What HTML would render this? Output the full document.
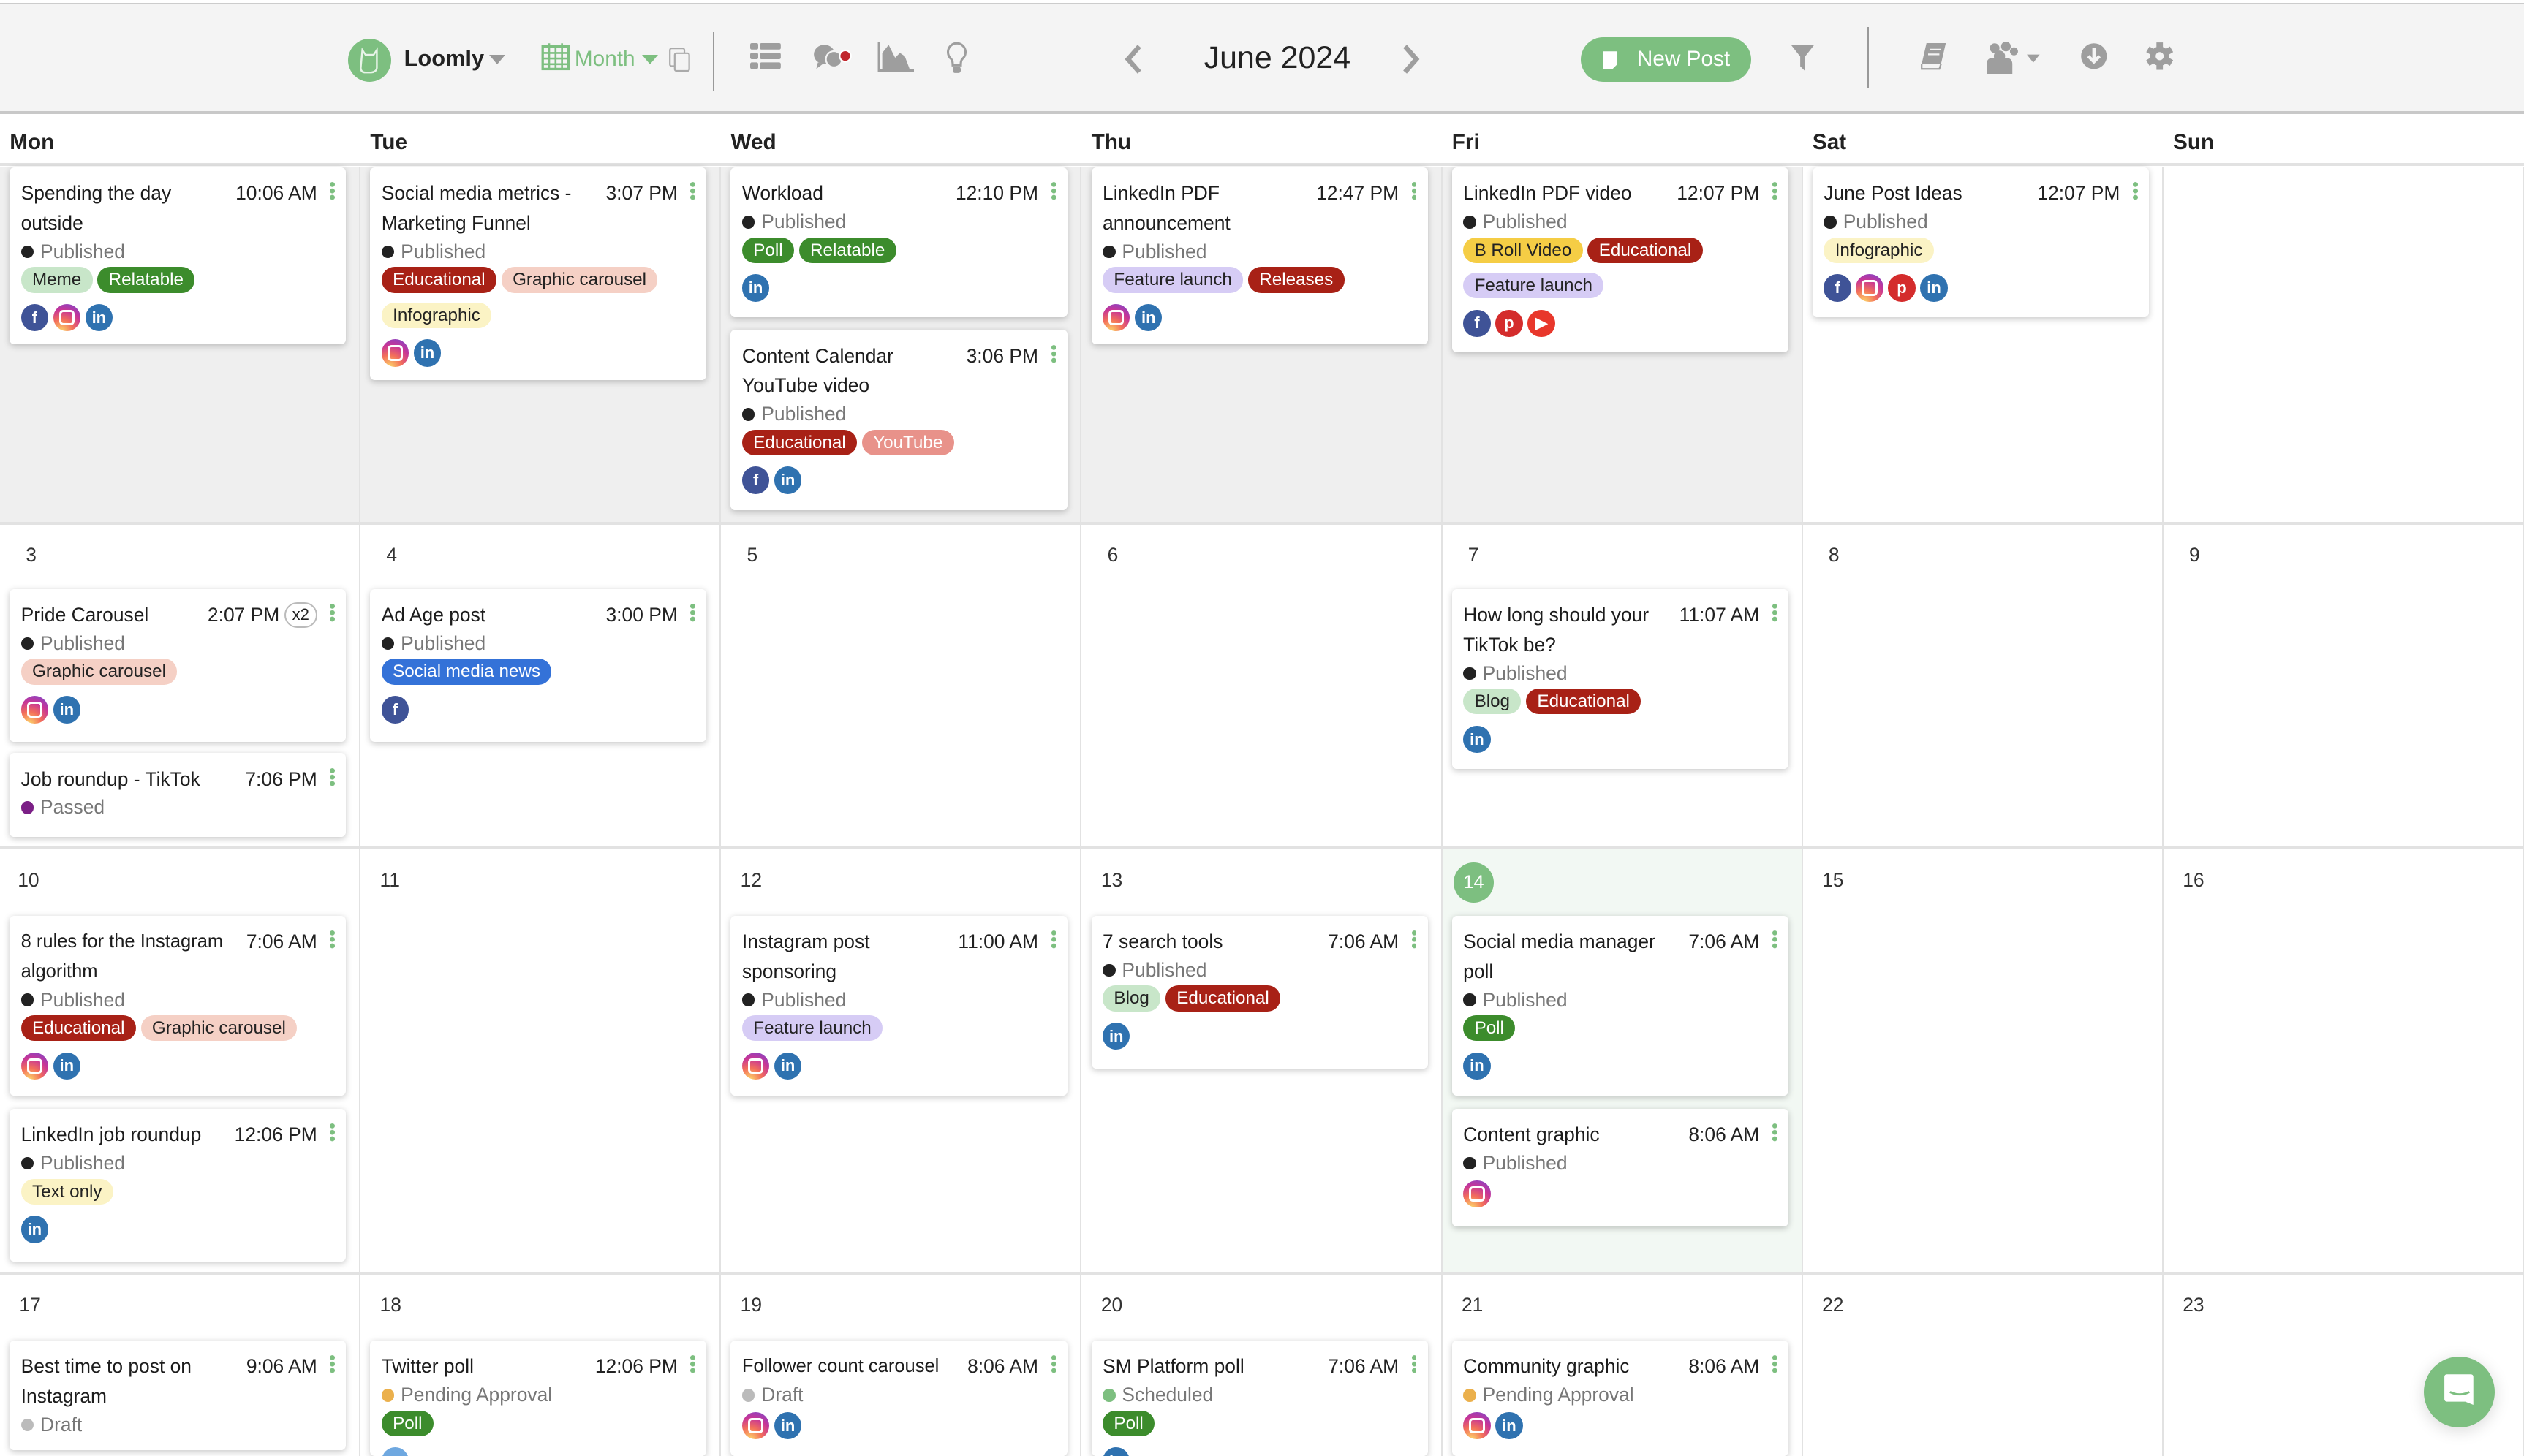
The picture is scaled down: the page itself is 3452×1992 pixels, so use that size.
<!DOCTYPE html>
<html><head><meta charset="utf-8"><style>
*{box-sizing:border-box;margin:0;padding:0}
html,body{width:3452px;height:1992px;overflow:hidden;background:#fff}
#w{zoom:2.2015;width:1568px;height:905px;position:relative;font-family:"Liberation Sans",sans-serif;color:#222;overflow:hidden}
.tb{position:absolute;left:0;top:2px;width:1568px;height:69px;background:#f4f4f4;border-top:1px solid #ccc;border-bottom:2px solid #c8c8c8}
.ab{position:absolute}
.dh{position:absolute;top:73px;height:30px;width:1568px;border-bottom:2px solid #e2e2e2;background:#fff}
.dh span{position:absolute;top:8px;font-weight:bold;font-size:13.5px}
.cell{position:absolute;width:224px;border-right:1px solid #e2e2e2;border-bottom:2px solid #e2e2e2}
.g{background:#efefef}.t{background:#f2f8f3}
.num{position:absolute;left:16px;top:12px;font-size:12px;color:#333}
.card{position:absolute;width:209px;background:#fff;border-radius:3px;box-shadow:0 1px 4px rgba(0,0,0,.22);padding:7px 7px 8px 7px;overflow:hidden}
.tr{display:flex;justify-content:space-between;align-items:flex-start}
.ti{font-size:12px;line-height:18.5px;width:136px;font-weight:500;color:#1c1c1c}
.tm{font-size:12px;line-height:18.5px;white-space:nowrap;display:flex;align-items:center}
.dots{display:inline-block;width:3px;height:12px;margin-left:8px;margin-top:-3px;background:radial-gradient(circle,#7dbf80 1.4px,transparent 1.6px) 0 0/3px 4px}
.x2{display:inline-block;border:1px solid #bbb;border-radius:9px;font-size:10px;line-height:14px;padding:0 4px;margin-left:3px}
.st{font-size:12px;line-height:17px;color:#777;display:flex;align-items:center}
.st i{width:8px;height:8px;border-radius:50%;background:#222;margin-right:4px;display:inline-block}
.tg{line-height:0}
.tg b{display:inline-block;height:16px;line-height:16px;border-radius:8px;padding:0 7px;font-size:11px;font-weight:normal;margin:1px 3px 5px 0;color:#222}
.gl{background:#c8e6c9}.gd{background:#3c8c2c;color:#fff!important}.ed{background:#a82116;color:#fff!important}.gc{background:#f5d0c5}.inf{background:#fbf3c5}.fl{background:#d6ccf5}.yt{background:#e8928a;color:#fff!important}.br{background:#f5cd45}.sm{background:#3472d8;color:#fff!important}
.ic{display:flex;gap:3px;margin-top:2px}
.ic s{width:17px;height:17px;border-radius:50%;color:#fff;font-size:10px;font-weight:bold;text-decoration:none;display:flex;align-items:center;justify-content:center;font-family:"Liberation Sans",sans-serif}
.fb{background:#3f5397}.li{background:#2f72b0}.pi{background:#d42c2c}.yo{background:#e8372b}
.ig{background:radial-gradient(circle at 30% 100%,#fcd56b 0,#f3705a 35%,#c73597 65%,#6f4bd6 100%)}
.ig::after{content:"";width:7px;height:7px;border:1.4px solid #fff;border-radius:2.5px}
</style></head><body><div id="w">
<div class="tb"></div>
<div class="ab" style="left:216px;top:24px;width:27px;height:27px;border-radius:50%;background:#7dbf80"></div>
<svg class="ab" style="left:222px;top:29px" width="15" height="17" viewBox="0 0 15 17"><path d="M3 2l2 3h5l2-3v11c0 2-2 3-4 3H5c-2 0-3-1-3-3z" fill="none" stroke="#e8f4e8" stroke-width="1.1"/></svg>
<div class="ab" style="left:251px;top:28px;font-weight:bold;font-size:14px">Loomly</div>
<div class="ab" style="left:304px;top:34px;border:5px solid transparent;border-top:6px solid #999"></div>
<svg class="ab" style="left:336px;top:26px" width="18" height="18" viewBox="0 0 18 18"><rect x="1" y="3" width="16" height="14" fill="none" stroke="#7dbf80" stroke-width="1.5"/><path d="M1 7h16M1 10.5h16M1 14h16M5 3v14M9 3v14M13 3v14M5 1v4M13 1v4" stroke="#7dbf80" stroke-width="1.2"/></svg>
<div class="ab" style="left:357px;top:29px;font-size:13.5px;color:#7dbf80">Month</div>
<div class="ab" style="left:399px;top:34px;border:5px solid transparent;border-top:6px solid #7dbf80"></div>
<svg class="ab" style="left:415px;top:29px" width="14" height="16"><rect x="1" y="1" width="9" height="11" rx="1" fill="none" stroke="#aaa"/><rect x="4" y="4" width="9" height="11" rx="1" fill="#f4f4f4" stroke="#aaa"/></svg>
<div class="ab" style="left:443px;top:20px;width:1px;height:37px;background:#999"></div>
<svg class="ab" style="left:466px;top:27px" width="19" height="16"><g fill="#9e9e9e"><rect x="0" y="0" width="5" height="4" rx="1"/><rect x="6" y="0" width="13" height="4" rx="1"/><rect x="0" y="6" width="5" height="4" rx="1"/><rect x="6" y="6" width="13" height="4" rx="1"/><rect x="0" y="12" width="5" height="4" rx="1"/><rect x="6" y="12" width="13" height="4" rx="1"/></g></svg>
<svg class="ab" style="left:505px;top:27px" width="26" height="20"><ellipse cx="7" cy="7" rx="6.5" ry="6" fill="#9e9e9e"/><path d="M3 12l-1 4 4-3z" fill="#9e9e9e"/><ellipse cx="13" cy="10" rx="5" ry="5" fill="#9e9e9e" stroke="#f4f4f4"/><circle cx="20" cy="8" r="3.5" fill="#c1272d" stroke="#fff"/></svg>
<svg class="ab" style="left:545px;top:26px" width="23" height="19"><path d="M1 0v18h22" fill="none" stroke="#9e9e9e" stroke-width="1.5"/><path d="M3 17V7l4-5 4 8 3-3 3 2 3 8z" fill="#9e9e9e"/></svg>
<svg class="ab" style="left:587px;top:26px" width="15" height="21"><path d="M7.5 1a5.5 5.5 0 0 0-3.5 9.7c1 1 1 2.5 1 4h5c0-1.5 0-3 1-4A5.5 5.5 0 0 0 7.5 1z" fill="none" stroke="#9e9e9e" stroke-width="1.4"/><rect x="5" y="15.5" width="5" height="4" rx="1.5" fill="#9e9e9e"/></svg>
<svg class="ab" style="left:697px;top:27px" width="14" height="20"><path d="M11 2L4 10l7 8" fill="none" stroke="#9e9e9e" stroke-width="3"/></svg>
<div class="ab" style="left:748px;top:25px;font-size:19.5px;color:#222">June 2024</div>
<svg class="ab" style="left:870px;top:27px" width="14" height="20"><path d="M3 2l7 8-7 8" fill="none" stroke="#9e9e9e" stroke-width="3"/></svg>
<div class="ab" style="left:982px;top:23px;width:106px;height:28px;border-radius:14px;background:#7dbf80"></div>
<svg class="ab" style="left:995px;top:31px" width="12" height="13"><path d="M1 1h9v8l-3 3H1z" fill="#fff"/></svg>
<div class="ab" style="left:1017px;top:29px;font-size:13.5px;color:#fff">New Post</div>
<svg class="ab" style="left:1113px;top:28px" width="14" height="16"><path d="M0 0h14L8.5 7v9L5.5 13V7z" fill="#9e9e9e"/></svg>
<div class="ab" style="left:1160px;top:17px;width:1px;height:38px;background:#999"></div>
<svg class="ab" style="left:1193px;top:27px" width="17" height="17"><path d="M4 0h12l-3 13H1z" fill="#9e9e9e"/><path d="M1 13l0 3h11l1-3" fill="none" stroke="#9e9e9e"/><path d="M6 4h7M5 7h7" stroke="#f4f4f4"/></svg>
<svg class="ab" style="left:1234px;top:26px" width="36" height="20"><g fill="#9e9e9e"><circle cx="5" cy="4" r="3"/><circle cx="12" cy="3" r="3"/><circle cx="8" cy="9" r="3.5"/><path d="M0 14c0-3 2-4 4-4h8c2 0 4 1 4 4v6H0z"/><circle cx="17" cy="6" r="2.5"/></g><path d="M25 8h8l-4 5z" fill="#9e9e9e"/></svg>
<svg class="ab" style="left:1292px;top:26px" width="18" height="18"><circle cx="9" cy="9" r="8" fill="#9e9e9e"/><path d="M9 4v8M5.5 9L9 12.5 12.5 9" fill="none" stroke="#f4f4f4" stroke-width="2"/></svg>
<svg class="ab" style="left:1333px;top:26px" width="17" height="18"><g fill="#9e9e9e" transform="translate(8.5 9)"><rect x="-2" y="-8.5" width="4" height="17"/><rect x="-2" y="-8.5" width="4" height="17" transform="rotate(60)"/><rect x="-2" y="-8.5" width="4" height="17" transform="rotate(120)"/><circle r="6"/></g><circle cx="8.5" cy="9" r="2.5" fill="#f4f4f4"/></svg>

<div class="dh"><span style="left:6px">Mon</span><span style="left:230px">Tue</span><span style="left:454px">Wed</span><span style="left:678px">Thu</span><span style="left:902px">Fri</span><span style="left:1126px">Sat</span><span style="left:1350px">Sun</span></div>

<div class="cell g" style="left:0;top:104px;height:222px"></div><div class="cell g" style="left:224px;top:104px;height:222px"></div><div class="cell g" style="left:448px;top:104px;height:222px"></div><div class="cell g" style="left:672px;top:104px;height:222px"></div><div class="cell g" style="left:896px;top:104px;height:222px"></div><div class="cell" style="left:1120px;top:104px;height:222px"></div><div class="cell" style="left:1344px;top:104px;height:222px"></div>
<div class="cell" style="left:0;top:326px;height:202px"><span class="num">3</span></div><div class="cell" style="left:224px;top:326px;height:202px"><span class="num">4</span></div><div class="cell" style="left:448px;top:326px;height:202px"><span class="num">5</span></div><div class="cell" style="left:672px;top:326px;height:202px"><span class="num">6</span></div><div class="cell" style="left:896px;top:326px;height:202px"><span class="num">7</span></div><div class="cell" style="left:1120px;top:326px;height:202px"><span class="num">8</span></div><div class="cell" style="left:1344px;top:326px;height:202px"><span class="num">9</span></div>
<div class="cell" style="left:0;top:528px;height:264px"><span class="num" style="left:11px">10</span></div><div class="cell" style="left:224px;top:528px;height:264px"><span class="num" style="left:12px">11</span></div><div class="cell" style="left:448px;top:528px;height:264px"><span class="num" style="left:12px">12</span></div><div class="cell" style="left:672px;top:528px;height:264px"><span class="num" style="left:12px">13</span></div><div class="cell t" style="left:896px;top:528px;height:264px"><span class="ab" style="left:7px;top:8px;width:25px;height:25px;border-radius:50%;background:#7dbf80;color:#fff;font-size:11.5px;text-align:center;line-height:25px">14</span></div><div class="cell" style="left:1120px;top:528px;height:264px"><span class="num" style="left:12px">15</span></div><div class="cell" style="left:1344px;top:528px;height:264px"><span class="num" style="left:12px">16</span></div>
<div class="cell" style="left:0;top:792px;height:113px;border-bottom:0"><span class="num" style="left:12px">17</span></div><div class="cell" style="left:224px;top:792px;height:113px;border-bottom:0"><span class="num" style="left:12px">18</span></div><div class="cell" style="left:448px;top:792px;height:113px;border-bottom:0"><span class="num" style="left:12px">19</span></div><div class="cell" style="left:672px;top:792px;height:113px;border-bottom:0"><span class="num" style="left:12px">20</span></div><div class="cell" style="left:896px;top:792px;height:113px;border-bottom:0"><span class="num" style="left:12px">21</span></div><div class="cell" style="left:1120px;top:792px;height:113px;border-bottom:0"><span class="num" style="left:12px">22</span></div><div class="cell" style="left:1344px;top:792px;height:113px;border-bottom:0"><span class="num" style="left:12px">23</span></div>

<div class="card" style="left:6px;top:104px;height:110px"><div class="tr"><div class="ti">Spending the day outside</div><div class="tm">10:06 AM<span class="dots"></span></div></div><div class="st"><i></i>Published</div><div class="tg"><b class="gl">Meme</b><b class="gd">Relatable</b></div><div class="ic"><s class="fb">f</s><s class="ig"></s><s class="li">in</s></div></div>
<div class="card" style="left:230px;top:104px;height:132px"><div class="tr"><div class="ti">Social media metrics - Marketing Funnel</div><div class="tm">3:07 PM<span class="dots"></span></div></div><div class="st"><i></i>Published</div><div class="tg"><b class="ed">Educational</b><b class="gc">Graphic carousel</b><b class="inf">Infographic</b></div><div class="ic"><s class="ig"></s><s class="li">in</s></div></div>
<div class="card" style="left:454px;top:104px;height:93px"><div class="tr"><div class="ti">Workload</div><div class="tm">12:10 PM<span class="dots"></span></div></div><div class="st"><i></i>Published</div><div class="tg"><b class="gd">Poll</b><b class="gd">Relatable</b></div><div class="ic"><s class="li">in</s></div></div>
<div class="card" style="left:454px;top:205px;height:112px"><div class="tr"><div class="ti" style="width:128px">Content Calendar YouTube video</div><div class="tm">3:06 PM<span class="dots"></span></div></div><div class="st"><i></i>Published</div><div class="tg"><b class="ed">Educational</b><b class="yt">YouTube</b></div><div class="ic"><s class="fb">f</s><s class="li">in</s></div></div>
<div class="card" style="left:678px;top:104px;height:110px"><div class="tr"><div class="ti" style="width:120px">LinkedIn PDF announcement</div><div class="tm">12:47 PM<span class="dots"></span></div></div><div class="st"><i></i>Published</div><div class="tg"><b class="fl">Feature launch</b><b class="ed">Releases</b></div><div class="ic"><s class="ig"></s><s class="li">in</s></div></div>
<div class="card" style="left:902px;top:104px;height:115px"><div class="tr"><div class="ti">LinkedIn PDF video</div><div class="tm">12:07 PM<span class="dots"></span></div></div><div class="st"><i></i>Published</div><div class="tg"><b class="br">B Roll Video</b><b class="ed">Educational</b><b class="fl">Feature launch</b></div><div class="ic"><s class="fb">f</s><s class="pi">p</s><s class="yo">▶</s></div></div>
<div class="card" style="left:1126px;top:104px;height:93px"><div class="tr"><div class="ti">June Post Ideas</div><div class="tm">12:07 PM<span class="dots"></span></div></div><div class="st"><i></i>Published</div><div class="tg"><b class="inf">Infographic</b></div><div class="ic"><s class="fb">f</s><s class="ig"></s><s class="pi">p</s><s class="li">in</s></div></div>

<div class="card" style="left:6px;top:366px;height:95px"><div class="tr"><div class="ti">Pride Carousel</div><div class="tm">2:07 PM<span class="x2">x2</span><span class="dots"></span></div></div><div class="st"><i></i>Published</div><div class="tg"><b class="gc">Graphic carousel</b></div><div class="ic"><s class="ig"></s><s class="li">in</s></div></div>
<div class="card" style="left:6px;top:468px;height:52px"><div class="tr"><div class="ti">Job roundup - TikTok</div><div class="tm">7:06 PM<span class="dots"></span></div></div><div class="st"><i style="background:#7b1f86"></i>Passed</div></div>
<div class="card" style="left:230px;top:366px;height:95px"><div class="tr"><div class="ti">Ad Age post</div><div class="tm">3:00 PM<span class="dots"></span></div></div><div class="st"><i></i>Published</div><div class="tg"><b class="sm">Social media news</b></div><div class="ic"><s class="fb">f</s></div></div>
<div class="card" style="left:902px;top:366px;height:112px"><div class="tr"><div class="ti">How long should your TikTok be?</div><div class="tm">11:07 AM<span class="dots"></span></div></div><div class="st"><i></i>Published</div><div class="tg"><b class="gl">Blog</b><b class="ed">Educational</b></div><div class="ic"><s class="li">in</s></div></div>

<div class="card" style="left:6px;top:569px;height:112px"><div class="tr"><div class="ti" style="width:150px;font-size:11.6px">8 rules for the Instagram algorithm</div><div class="tm">7:06 AM<span class="dots"></span></div></div><div class="st"><i></i>Published</div><div class="tg"><b class="ed">Educational</b><b class="gc">Graphic carousel</b></div><div class="ic"><s class="ig"></s><s class="li">in</s></div></div>
<div class="card" style="left:6px;top:689px;height:95px"><div class="tr"><div class="ti">LinkedIn job roundup</div><div class="tm">12:06 PM<span class="dots"></span></div></div><div class="st"><i></i>Published</div><div class="tg"><b class="inf">Text only</b></div><div class="ic"><s class="li">in</s></div></div>
<div class="card" style="left:454px;top:569px;height:112px"><div class="tr"><div class="ti" style="width:110px">Instagram post sponsoring</div><div class="tm">11:00 AM<span class="dots"></span></div></div><div class="st"><i></i>Published</div><div class="tg"><b class="fl">Feature launch</b></div><div class="ic"><s class="ig"></s><s class="li">in</s></div></div>
<div class="card" style="left:678px;top:569px;height:95px"><div class="tr"><div class="ti">7 search tools</div><div class="tm">7:06 AM<span class="dots"></span></div></div><div class="st"><i></i>Published</div><div class="tg"><b class="gl">Blog</b><b class="ed">Educational</b></div><div class="ic"><s class="li">in</s></div></div>
<div class="card" style="left:902px;top:569px;height:112px"><div class="tr"><div class="ti">Social media manager poll</div><div class="tm">7:06 AM<span class="dots"></span></div></div><div class="st"><i></i>Published</div><div class="tg"><b class="gd">Poll</b></div><div class="ic"><s class="li">in</s></div></div>
<div class="card" style="left:902px;top:689px;height:73px"><div class="tr"><div class="ti">Content graphic</div><div class="tm">8:06 AM<span class="dots"></span></div></div><div class="st"><i></i>Published</div><div class="ic"><s class="ig"></s></div></div>

<div class="card" style="left:6px;top:833px;height:68px"><div class="tr"><div class="ti">Best time to post on Instagram</div><div class="tm">9:06 AM<span class="dots"></span></div></div><div class="st"><i style="background:#bbb"></i>Draft</div></div>
<div class="card" style="left:230px;top:833px;height:72px"><div class="tr"><div class="ti">Twitter poll</div><div class="tm">12:06 PM<span class="dots"></span></div></div><div class="st"><i style="background:#ebb04c"></i>Pending Approval</div><div class="tg"><b class="gd">Poll</b></div><div class="ic"><s class="li" style="background:#6fa8e0"></s></div></div>
<div class="card" style="left:454px;top:833px;height:72px"><div class="tr"><div class="ti" style="width:145px;font-size:11.6px">Follower count carousel</div><div class="tm">8:06 AM<span class="dots"></span></div></div><div class="st"><i style="background:#bbb"></i>Draft</div><div class="ic"><s class="ig"></s><s class="li">in</s></div></div>
<div class="card" style="left:678px;top:833px;height:72px"><div class="tr"><div class="ti">SM Platform poll</div><div class="tm">7:06 AM<span class="dots"></span></div></div><div class="st"><i style="background:#7dbf80"></i>Scheduled</div><div class="tg"><b class="gd">Poll</b></div><div class="ic"><s class="li">in</s></div></div>
<div class="card" style="left:902px;top:833px;height:72px"><div class="tr"><div class="ti">Community graphic</div><div class="tm">8:06 AM<span class="dots"></span></div></div><div class="st"><i style="background:#ebb04c"></i>Pending Approval</div><div class="ic"><s class="ig"></s><s class="li">in</s></div></div>

<div class="ab" style="left:1506px;top:843px;width:44px;height:44px;border-radius:50%;background:#7dbf80;box-shadow:0 2px 10px rgba(0,0,0,.15)"></div>
<svg class="ab" style="left:1518px;top:853px" width="20" height="22"><path d="M2 1h15a1.5 1.5 0 0 1 1.5 1.5V20l-5-2H2A1.5 1.5 0 0 1 .5 16.5v-14A1.5 1.5 0 0 1 2 1z" fill="#fff"/><path d="M4 12q6 3 12 0" fill="none" stroke="#7dbf80" stroke-width="1.3"/></svg>
</div></body></html>
